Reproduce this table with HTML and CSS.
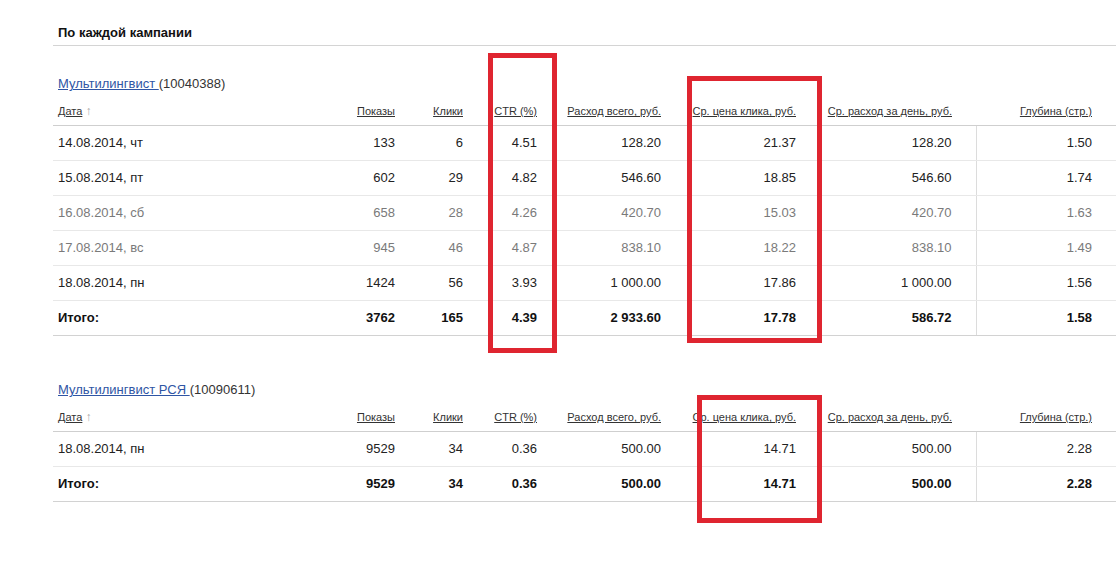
FILE: index.html
```html
<!DOCTYPE html>
<html lang="ru">
<head>
<meta charset="utf-8">
<title>По каждой кампании</title>
<link rel="stylesheet" href="styles.css">
</head>
<body>
<div class="page">
  <h2 class="section-title">По каждой кампании</h2>

  <div class="campaign">
    <div class="campaign-name"><a href="#">Мультилингвист </a>(10040388)</div>
    <table class="stats">
      <colgroup>
        <col class="c-date"><col class="c-shows"><col class="c-clicks"><col class="c-ctr">
        <col class="c-spend"><col class="c-cpc"><col class="c-day"><col class="c-depth">
      </colgroup>
      <thead>
        <tr>
          <th class="left"><a href="#">Дата</a> <span class="arrow">↑</span></th>
          <th><a href="#">Показы</a></th>
          <th><a href="#">Клики</a></th>
          <th><a href="#">CTR (%)</a></th>
          <th><a href="#">Расход всего, руб.</a></th>
          <th><a href="#">Ср. цена клика, руб.</a></th>
          <th><a href="#">Ср. расход за день, руб.</a></th>
          <th><a href="#">Глубина (стр.)</a></th>
        </tr>
      </thead>
      <tbody>
        <tr><td class="left">14.08.2014, чт</td><td>133</td><td>6</td><td>4.51</td><td>128.20</td><td>21.37</td><td>128.20</td><td class="sep">1.50</td></tr>
        <tr><td class="left">15.08.2014, пт</td><td>602</td><td>29</td><td>4.82</td><td>546.60</td><td>18.85</td><td>546.60</td><td class="sep">1.74</td></tr>
        <tr class="weekend"><td class="left">16.08.2014, сб</td><td>658</td><td>28</td><td>4.26</td><td>420.70</td><td>15.03</td><td>420.70</td><td class="sep">1.63</td></tr>
        <tr class="weekend"><td class="left">17.08.2014, вс</td><td>945</td><td>46</td><td>4.87</td><td>838.10</td><td>18.22</td><td>838.10</td><td class="sep">1.49</td></tr>
        <tr><td class="left">18.08.2014, пн</td><td>1424</td><td>56</td><td>3.93</td><td>1 000.00</td><td>17.86</td><td>1 000.00</td><td class="sep">1.56</td></tr>
        <tr class="total"><td class="left">Итого:</td><td>3762</td><td>165</td><td>4.39</td><td>2 933.60</td><td>17.78</td><td>586.72</td><td class="sep">1.58</td></tr>
      </tbody>
    </table>
  </div>

  <div class="campaign second">
    <div class="campaign-name"><a href="#">Мультилингвист РСЯ </a>(10090611)</div>
    <table class="stats">
      <colgroup>
        <col class="c-date"><col class="c-shows"><col class="c-clicks"><col class="c-ctr">
        <col class="c-spend"><col class="c-cpc"><col class="c-day"><col class="c-depth">
      </colgroup>
      <thead>
        <tr>
          <th class="left"><a href="#">Дата</a> <span class="arrow">↑</span></th>
          <th><a href="#">Показы</a></th>
          <th><a href="#">Клики</a></th>
          <th><a href="#">CTR (%)</a></th>
          <th><a href="#">Расход всего, руб.</a></th>
          <th><a href="#">Ср. цена клика, руб.</a></th>
          <th><a href="#">Ср. расход за день, руб.</a></th>
          <th><a href="#">Глубина (стр.)</a></th>
        </tr>
      </thead>
      <tbody>
        <tr><td class="left">18.08.2014, пн</td><td>9529</td><td>34</td><td>0.36</td><td>500.00</td><td>14.71</td><td>500.00</td><td class="sep">2.28</td></tr>
        <tr class="total"><td class="left">Итого:</td><td>9529</td><td>34</td><td>0.36</td><td>500.00</td><td>14.71</td><td>500.00</td><td class="sep">2.28</td></tr>
      </tbody>
    </table>
  </div>
</div>

<div class="mark mark-ctr"></div>
<div class="mark mark-cpc1"></div>
<div class="mark mark-cpc2"></div>
</body>
</html>
```

FILE: styles.css
```css
html, body {
  margin: 0;
  padding: 0;
  background: #fff;
}

body {
  position: relative;
  width: 1116px;
  height: 587px;
  overflow: hidden;
  font-family: "Liberation Sans", Arial, sans-serif;
  font-size: 13px;
  color: #222;
}

.page {
  padding-left: 53px;
}

.section-title {
  margin: 0;
  padding: 25px 0 4px 5px;
  font-size: 13px;
  line-height: 16px;
  font-weight: bold;
  color: #111;
  border-bottom: 1px solid #d4d4d4;
}

.campaign {
  margin-top: 30px;
}

.campaign.second {
  margin-top: 46px;
}

.campaign-name {
  padding-left: 5px;
  line-height: 16px;
  font-size: 13px;
  color: #333;
}

.campaign-name a {
  color: #2f55a4;
  text-decoration: underline;
}

.stats {
  width: 1063px;
  table-layout: fixed;
  border-collapse: collapse;
}

.c-date { width: 277px; }
.c-shows { width: 89px; }
.c-clicks { width: 68px; }
.c-ctr { width: 74px; }
.c-spend { width: 124px; }
.c-cpc { width: 135px; }
.c-day { width: 156px; }
.c-depth { width: 140px; }

.stats th {
  padding: 12px 24px 7px 0;
  font-size: 11px;
  line-height: 14px;
  font-weight: normal;
  text-align: right;
  white-space: nowrap;
  border-bottom: 1px solid #cfcfcf;
}

.stats th a {
  color: #333;
  text-decoration: underline;
}

.stats th .arrow {
  color: #a8a8a8;
  font-size: 12px;
  text-decoration: none;
}

.stats td {
  height: 34px;
  padding: 0 24px 0 0;
  line-height: 16px;
  text-align: right;
  white-space: nowrap;
  border-bottom: 1px solid #e8e8e8;
  color: #222;
}

.stats .left {
  text-align: left;
  padding-left: 5px;
  padding-right: 0;
}

.stats td.sep {
  border-left: 1px solid #dcdcdc;
}

.stats tr.weekend td {
  color: #7a7a7a;
}

.stats tr.total td {
  font-weight: bold;
  color: #111;
  border-top: 1px solid #cdcdcd;
  border-bottom: 1px solid #d2d2d2;
}

.mark {
  position: absolute;
  box-sizing: border-box;
  border: 5px solid #df2530;
}

.mark-ctr {
  left: 488px;
  top: 53px;
  width: 69px;
  height: 300px;
}

.mark-cpc1 {
  left: 687px;
  top: 76px;
  width: 135px;
  height: 267px;
}

.mark-cpc2 {
  left: 697px;
  top: 395px;
  width: 125px;
  height: 128px;
}
```
